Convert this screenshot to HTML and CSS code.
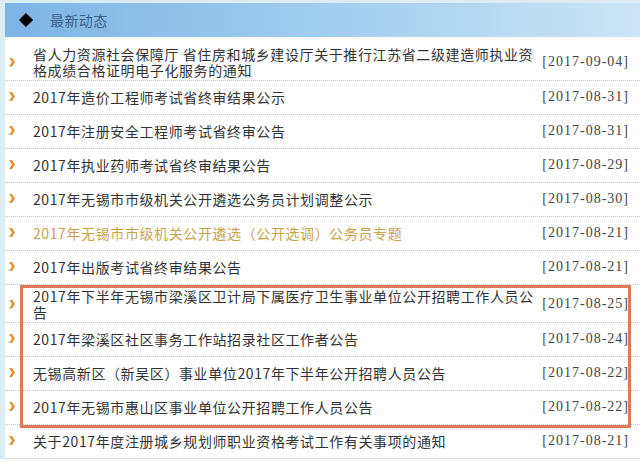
FILE: index.html
```html
<!DOCTYPE html>
<html lang="zh-CN">
<head>
  <meta charset="UTF-8">
  <meta name="viewport" content="width=device-width, initial-scale=1.0">
  <title>最新动态</title>
  <link rel="stylesheet" href="styles.css">
</head>
<body>
  <div class="panel">
    <!-- Panel title bar -->
    <div class="panel-head">
      <span class="diamond"></span>
      <h2>最新动态</h2>
    </div>

    <!-- News list -->
    <div class="news">
      <div class="item two">
        <span class="title">省人力资源社会保障厅 省住房和城乡建设厅关于推行江苏省二级建造师执业资格成绩合格证明电子化服务的通知</span>
        <span class="date">[2017-09-04]</span>
      </div>
      <div class="item">
        <span class="title">2017年造价工程师考试省终审结果公示</span>
        <span class="date">[2017-08-31]</span>
      </div>
      <div class="item">
        <span class="title">2017年注册安全工程师考试省终审公告</span>
        <span class="date">[2017-08-31]</span>
      </div>
      <div class="item">
        <span class="title">2017年执业药师考试省终审结果公告</span>
        <span class="date">[2017-08-29]</span>
      </div>
      <div class="item">
        <span class="title">2017年无锡市市级机关公开遴选公务员计划调整公示</span>
        <span class="date">[2017-08-30]</span>
      </div>
      <div class="item hot">
        <span class="title">2017年无锡市市级机关公开遴选（公开选调）公务员专题</span>
        <span class="date">[2017-08-21]</span>
      </div>
      <div class="item">
        <span class="title">2017年出版考试省终审结果公告</span>
        <span class="date">[2017-08-21]</span>
      </div>

      <!-- Highlighted group -->
      <div class="marked">
        <div class="item two">
          <span class="title">2017年下半年无锡市梁溪区卫计局下属医疗卫生事业单位公开招聘工作人员公告</span>
          <span class="date">[2017-08-25]</span>
        </div>
        <div class="item">
          <span class="title">2017年梁溪区社区事务工作站招录社区工作者公告</span>
          <span class="date">[2017-08-24]</span>
        </div>
        <div class="item">
          <span class="title">无锡高新区（新吴区）事业单位2017年下半年公开招聘人员公告</span>
          <span class="date">[2017-08-22]</span>
        </div>
        <div class="item">
          <span class="title">2017年无锡市惠山区事业单位公开招聘工作人员公告</span>
          <span class="date">[2017-08-22]</span>
        </div>
      </div>

      <div class="item">
        <span class="title">关于2017年度注册城乡规划师职业资格考试工作有关事项的通知</span>
        <span class="date">[2017-08-21]</span>
      </div>
    </div>
  </div>
</body>
</html>
```

FILE: styles.css
```css
/* Basic styling */
body {
  margin: 0;
  background: #fff;
  font-family: "Liberation Sans Narrow", "Noto Sans CJK SC", sans-serif;
  overflow: hidden;
}
.panel {
  border-left: 5px solid #dcecf7;
  border-top: 3px solid #dcecf7;
}
/* Title bar */
.panel-head {
  height: 34px;
  display: flex;
  align-items: center;
  padding-left: 16px;
  background: linear-gradient(to right, #7db5e5, #a9d2f0 60%, #cbe5f6);
}
.diamond {
  width: 10px;
  height: 10px;
  background: #000;
  transform: rotate(45deg);
  margin-right: 19px;
}
.panel-head h2 {
  margin: 0;
  font-size: 14px;
  font-weight: normal;
  letter-spacing: 0.4px;
  color: #3d5f8e;
  font-family: "Noto Sans CJK SC", sans-serif;
}
/* News rows */
.news {
  padding-top: 6px;
}
.item {
  display: flex;
  align-items: center;
  min-height: 31px;
  padding-right: 11px;
  padding-bottom: 2px;
  border-bottom: 1px dotted #c6c6c6;
  font-size: 14px;
  line-height: 16px;
  color: #333;
}
.item::before {
  content: "";
  flex-shrink: 0;
  width: 6px;
  height: 9px;
  margin: 0 18px 0 4px;
  background: #e8922e;
  clip-path: polygon(0 0, 50% 0, 100% 50%, 50% 100%, 0 100%, 50% 50%);
}
.item.two {
  padding-top: 3px;
}
.title {
  flex: 1;
  letter-spacing: 0.6px;
}
.hot .title {
  color: #c9a24c;
}
.date {
  flex-shrink: 0;
  margin-left: 4px;
  font-family: "Liberation Serif", serif;
  letter-spacing: 1px;
  color: #444;
}
/* Orange box drawn round the highlighted rows */
.marked {
  position: relative;
}
.marked::after {
  content: "";
  position: absolute;
  top: 0;
  bottom: -3px;
  left: 15px;
  right: 9px;
  border: 3px solid #df795b;
  pointer-events: none;
}
```
